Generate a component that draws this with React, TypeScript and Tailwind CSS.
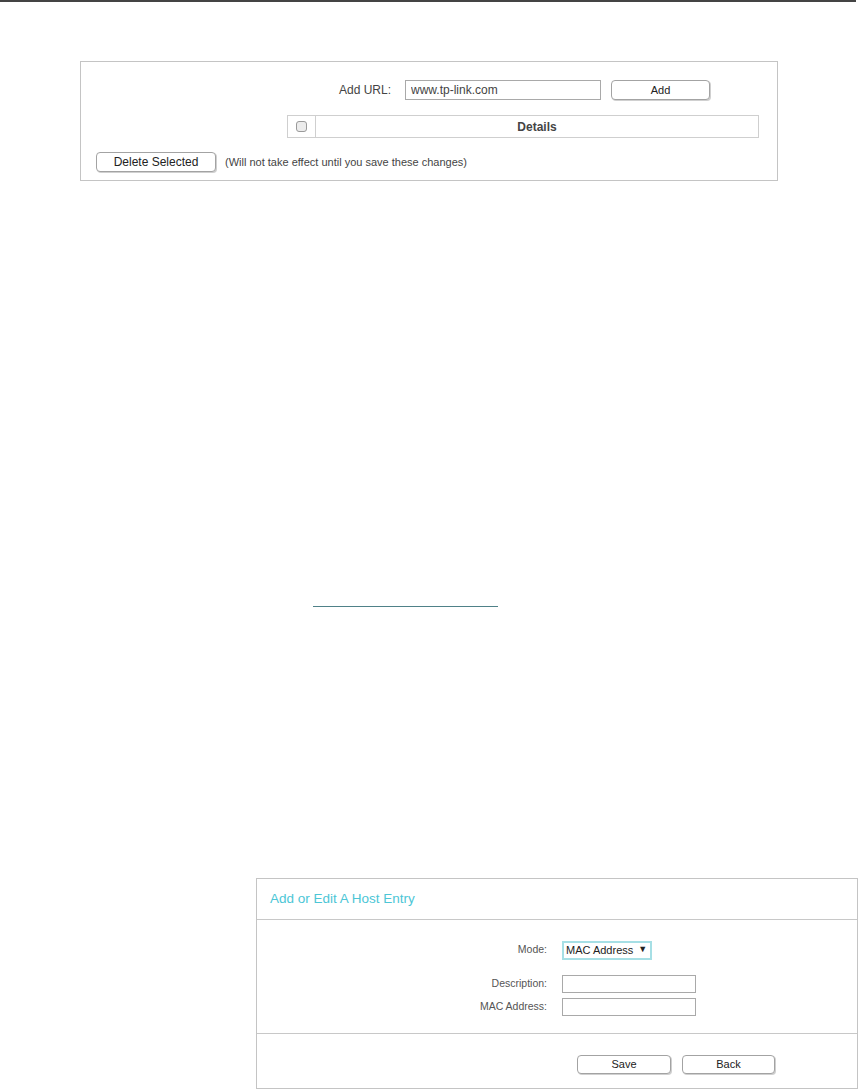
import React from "react";

function Btn({ label, w, h = "h-[19px]", size = "text-[11px]" }: { label: string; w: string; h?: string; size?: string }) {
  return (
    <button
      className={`${w} ${h} ${size} block rounded-[4px] border border-[#a3a3a3] bg-white text-[#222] shadow-[1px_1px_0_#d0d0d0] leading-none`}
    >
      {label}
    </button>
  );
}

export default function App() {
  return (
    <div className="w-[858px] h-[1090px] bg-white font-['Liberation_Sans',Arial,sans-serif] text-[#333] overflow-hidden">
      {/* top rule */}
      <div className="h-[2px] w-[856px] bg-[#444]" />

      {/* URL filter panel */}
      <div className="mt-[59px] ml-[80px] w-[698px] h-[120px] border border-[#c4c4c4] flex flex-col">
        <div className="mt-[18px] flex items-center h-[20px]">
          <span className="ml-[258px] text-[12px] text-[#444]">Add URL:</span>
          <input
            readOnly
            value="www.tp-link.com"
            className="ml-[14px] w-[196px] h-[20px] border border-[#a9a9a9] px-[5px] text-[12px] text-[#444] outline-none"
          />
          <div className="ml-[10px] flex">
            <Btn label="Add" w="w-[99px]" h="h-[20px]" />
          </div>
        </div>

        <div className="mt-[15px] ml-[206px] w-[472px] h-[23px] border border-[#cfcfcf] flex">
          <div className="w-[28px] border-r border-[#cfcfcf] flex items-center justify-center">
            <span className="w-[11px] h-[11px] rounded-[3px] border border-[#9a9a9a] bg-[#ececec]" />
          </div>
          <div className="flex-1 flex items-center justify-center text-[12px] font-bold text-[#444]">Details</div>
        </div>

        <div className="mt-[14px] ml-[15px] flex items-center">
          <Btn label="Delete Selected" w="w-[120px]" h="h-[20px]" size="text-[12px]" />
          <span className="ml-[9px] text-[11px] text-[#444]">(Will not take effect until you save these changes)</span>
        </div>
      </div>

      {/* link underline */}
      <div className="mt-[425px] ml-[313px] w-[185px] h-px bg-[#4f8188]" />

      {/* host entry panel */}
      <div className="mt-[271px] ml-[256px] w-[602px] h-[211px] border border-[#c4c4c4] flex flex-col">
        <div className="h-[40px] flex items-center pl-[13px] text-[13.5px] text-[#4cc6d6]">Add or Edit A Host Entry</div>
        <div className="h-px bg-[#c8c8c8]" />

        <div className="h-[113px] flex flex-col">
          <div className="mt-[21px] flex items-center h-[18px]">
            <span className="w-[290px] text-right text-[10.5px] text-[#555]">Mode:</span>
            <div className="ml-[15px] w-[90px] h-[19px] border-2 border-[#a6dfe5] flex items-center pl-[2px] text-[11px] text-[#222]">
              MAC Address
              <span className="ml-[5px] text-[9px]">▼</span>
            </div>
          </div>
          <div className="mt-[16px] flex items-center h-[18px]">
            <span className="w-[290px] text-right text-[10.5px] text-[#555]">Description:</span>
            <input readOnly className="ml-[15px] w-[134px] h-[18px] border border-[#a9a9a9] outline-none" />
          </div>
          <div className="mt-[5px] flex items-center h-[18px]">
            <span className="w-[290px] text-right text-[10.5px] text-[#555]">MAC Address:</span>
            <input readOnly className="ml-[15px] w-[134px] h-[18px] border border-[#a9a9a9] outline-none" />
          </div>
        </div>
        <div className="h-px bg-[#c8c8c8]" />

        <div className="mt-[21px] ml-[320px] flex gap-[11px]">
          <Btn label="Save" w="w-[94px]" />
          <Btn label="Back" w="w-[93px]" />
        </div>
      </div>
    </div>
  );
}
